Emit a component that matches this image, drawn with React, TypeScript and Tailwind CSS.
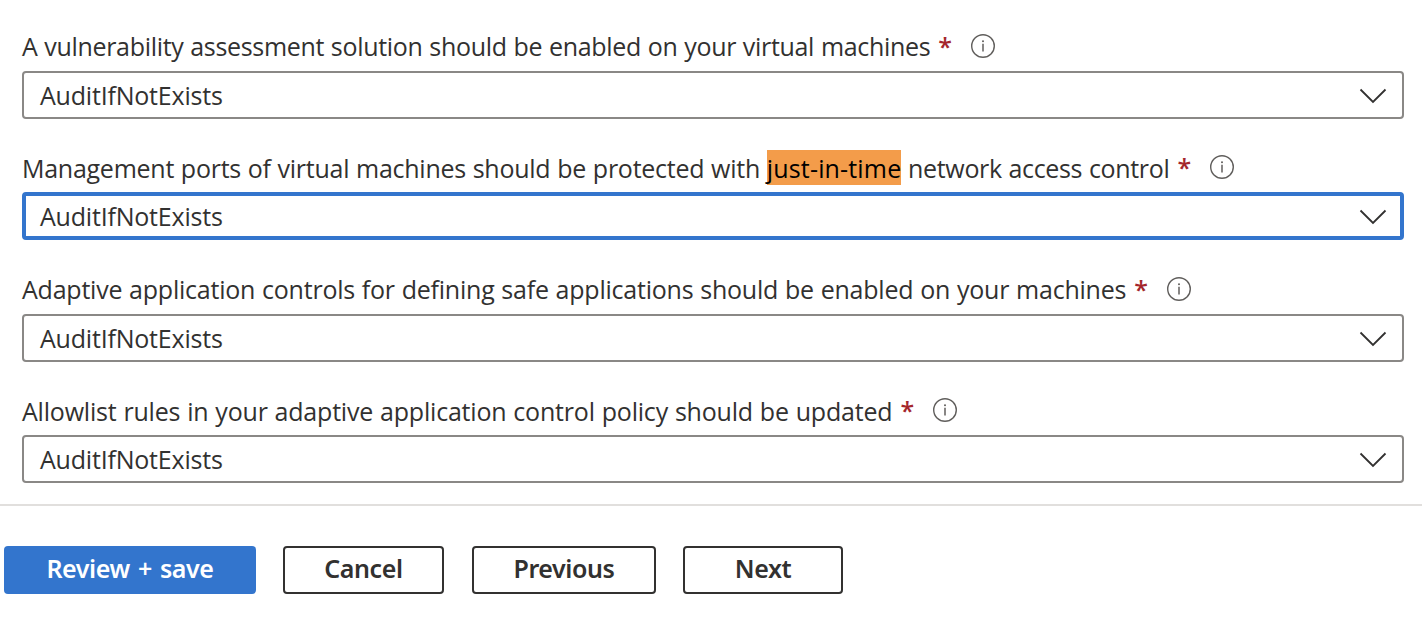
import React from "react";

type Field = {
  text: string;
  mark?: string;
  rest?: string;
  value: string;
  row: string;
  label: string;
  focused?: boolean;
};

const fields: Field[] = [
  {
    text: "A vulnerability assessment solution should be enabled on your virtual machines",
    value: "AuditIfNotExists",
    row: "h-[121px]",
    label: "tracking-[-0.315px]",
  },
  {
    text: "Management ports of virtual machines should be protected with ",
    mark: "just-in-time",
    rest: " network access control",
    value: "AuditIfNotExists",
    row: "h-[122px]",
    label: "pt-[1px] tracking-[-0.26px]",
    focused: true,
  },
  {
    text: "Adaptive application controls for defining safe applications should be enabled on your machines",
    value: "AuditIfNotExists",
    row: "h-[121px]",
    label: "tracking-[-0.226px]",
  },
  {
    text: "Allowlist rules in your adaptive application control policy should be updated",
    value: "AuditIfNotExists",
    row: "h-[112px]",
    label: "pt-[1px] tracking-[-0.195px]",
  },
];

function InfoIcon() {
  return (
    <svg className="ml-[18px] block h-[26px] w-[26px] shrink-0" viewBox="0 0 26 26" fill="none">
      <circle cx="13" cy="13" r="11.3" stroke="#605e5c" strokeWidth="1.4" />
      <path d="M13 10.8V18.4" stroke="#605e5c" strokeWidth="1.5" />
      <circle cx="13" cy="8.3" r="1" fill="#605e5c" />
    </svg>
  );
}

function Chevron() {
  return (
    <svg className="block h-[16px] w-[28px] shrink-0" viewBox="0 0 28 16" fill="none">
      <path d="M1.5 1.5L14 14L26.5 1.5" stroke="#323130" strokeWidth="1.8" />
    </svg>
  );
}

function SelectField({ field }: { field: Field }) {
  return (
    <div className={field.row}>
      <div className="flex h-[43px] items-start whitespace-nowrap">
        <label className={`whitespace-pre leading-[36px] [word-spacing:0.6px] ${field.label}`}>
          {field.text}
          {field.mark && (
            <mark className="inline-block h-[35px] bg-[#f39c4a] leading-[36px] tracking-[0.16px] text-black">
              {field.mark}
            </mark>
          )}
          {field.rest && <span className="tracking-[-0.34px]">{field.rest}</span>}
        </label>
        <span className="ml-[8px] w-[13.6px] font-semibold leading-[36px] text-[#a4262c]">*</span>
        <div className="flex h-[36px] items-center">
          <InfoIcon />
        </div>
      </div>
      <button
        type="button"
        className={
          field.focused
            ? "flex h-[48px] w-full items-center justify-between rounded-[4px] border-4 border-[#3375cd] pl-[14px] pr-[13px] pt-[2px]"
            : "flex h-[48px] w-full items-center justify-between rounded-[4px] border-2 border-[#8a8886] pl-[16px] pr-[15px] pt-[2px]"
        }
      >
        <span className="tracking-[-0.2px]">{field.value}</span>
        <Chevron />
      </button>
    </div>
  );
}

export default function App() {
  return (
    <div className="flex h-[620px] flex-col overflow-hidden bg-white font-['Open_Sans','Noto_Sans',sans-serif] text-[25px] text-[#323130]">
      <main className="h-[504px] pl-[22px] pr-[18px] pt-[28px]">
        {fields.map((f) => (
          <SelectField key={f.text} field={f} />
        ))}
      </main>
      <footer className="flex border-t-2 border-[#e1dfdd] pl-[4px] pt-[40px] font-['Noto_Sans',sans-serif] font-semibold leading-[34px] tracking-[-0.4px]">
        <button type="button" className="h-[48px] w-[252px] rounded-[4px] bg-[#3375cd] pb-[4px] text-white [word-spacing:2px]">
          Review + save
        </button>
        <button type="button" className="ml-[27px] h-[48px] w-[161px] rounded-[4px] border-2 border-[#323130] pb-[4px]">
          Cancel
        </button>
        <button type="button" className="ml-[28px] h-[48px] w-[184px] rounded-[4px] border-2 border-[#323130] pb-[4px]">
          Previous
        </button>
        <button type="button" className="ml-[27px] h-[48px] w-[160px] rounded-[4px] border-2 border-[#323130] pb-[4px]">
          Next
        </button>
      </footer>
    </div>
  );
}
